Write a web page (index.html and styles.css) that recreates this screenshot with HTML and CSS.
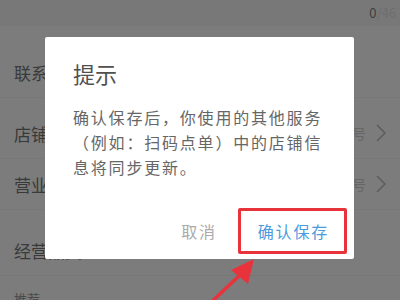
FILE: index.html
```html
<!DOCTYPE html>
<html lang="zh-CN">
<head>
    <meta charset="UTF-8">
    <meta name="viewport" content="width=device-width, initial-scale=1.0">
    <title>提示</title>
    <link rel="stylesheet" href="styles.css">
</head>
<body>
    <div class="page">
        <div class="counter"><b>0</b>/46</div>

        <div class="row row-contact">
            <span class="label">联系电话</span>
        </div>
        <div class="row row-shop">
            <span class="label">店铺类型</span>
            <span class="value">请选择类型号</span>
            <svg class="chev" width="10" height="18" viewBox="0 0 10 18"><polyline points="1,1 9,9 1,17" /></svg>
        </div>
        <div class="row row-hours">
            <span class="label">营业时间</span>
            <span class="value">请选择时间号</span>
            <svg class="chev" width="10" height="18" viewBox="0 0 10 18"><polyline points="1,1 9,9 1,17" /></svg>
        </div>
        <div class="row row-biz">
            <span class="label">经营品类</span>
        </div>
        <div class="row row-tip">
            <span class="small">推荐</span>
        </div>
    </div>

    <div class="dialog">
        <h3 class="title">提示</h3>
        <p class="msg">确认保存后，你使用的其他服务（例如：扫码点单）中的店铺信息将同步更新。</p>
        <div class="actions">
            <button class="btn cancel">取消</button>
            <button class="btn ok">确认保存</button>
        </div>
    </div>

    <!-- annotation -->
    <div class="mark"></div>
    <svg class="arrow" width="70" height="43" viewBox="0 0 70 43">
        <line x1="8" y1="52" x2="44" y2="18" />
        <polygon points="58,2 52,27 35,13" />
    </svg>
</body>
</html>
```

FILE: styles.css
```css
body {
    margin: 0;
    width: 400px;
    height: 300px;
    overflow: hidden;
    position: relative;
    font-family: "Noto Sans CJK SC", "Noto Sans", sans-serif;
    background-color: #7c7c7c;
}
.page {
    width: 400px;
    height: 300px;
    overflow: hidden;
}
.counter {
    height: 26px;
    line-height: 26px;
    text-align: right;
    padding-right: 4px;
    font-size: 13px;
    color: #6e6e6e;
    background-color: #787878;
}
.counter b {
    font-weight: normal;
    color: #404040;
}
.row {
    display: flex;
    align-items: center;
    height: 50px;
    padding: 0 14px;
    border-bottom: 1px solid #777;
}
.row-contact { margin-top: 21px; }
.row-shop { margin-top: 10px; }
.row-biz { margin-top: 15px; }
.row-tip { height: 20px; margin-top: 12px; border: none; }
.label {
    font-size: 17px;
    color: #393939;
}
.small {
    font-size: 13px;
    color: #4a4a4a;
}
.value {
    margin-left: auto;
    margin-right: 10px;
    font-size: 14px;
    color: #666;
}
.chev polyline {
    fill: none;
    stroke: #5c5c5c;
    stroke-width: 1.5;
}

.dialog {
    position: absolute;
    left: 45px;
    top: 37px;
    width: 309px;
    height: 222px;
    box-sizing: border-box;
    background-color: #fff;
    border-radius: 2px;
    padding: 21px 0 0;
}
.title {
    margin: 0;
    padding: 0 28px;
    font-size: 22px;
    line-height: 30px;
    font-weight: normal;
    color: #505050;
}
.msg {
    margin: 17px 0 0;
    padding: 0 28px;
    font-size: 16px;
    line-height: 25px;
    letter-spacing: 1.8px;
    color: #666;
}
.actions {
    display: flex;
    justify-content: flex-end;
    gap: 11px;
    margin-top: 28px;
    padding-right: 11px;
}
.btn {
    height: 46px;
    padding: 0 14px 0 16px;
    border: none;
    background: none;
    font-family: inherit;
    font-size: 16px;
    letter-spacing: 1.8px;
}
.cancel { color: #aaa; }
.ok { color: #4a9be0; }

.mark {
    position: absolute;
    left: 238px;
    top: 208px;
    width: 109px;
    height: 46px;
    box-sizing: border-box;
    border: 3px solid #e8333d;
    border-radius: 2px;
}
.arrow {
    position: absolute;
    left: 196px;
    top: 257px;
}
.arrow line {
    stroke: #e8333d;
    stroke-width: 3.5;
}
.arrow polygon {
    fill: #e8333d;
}
```
